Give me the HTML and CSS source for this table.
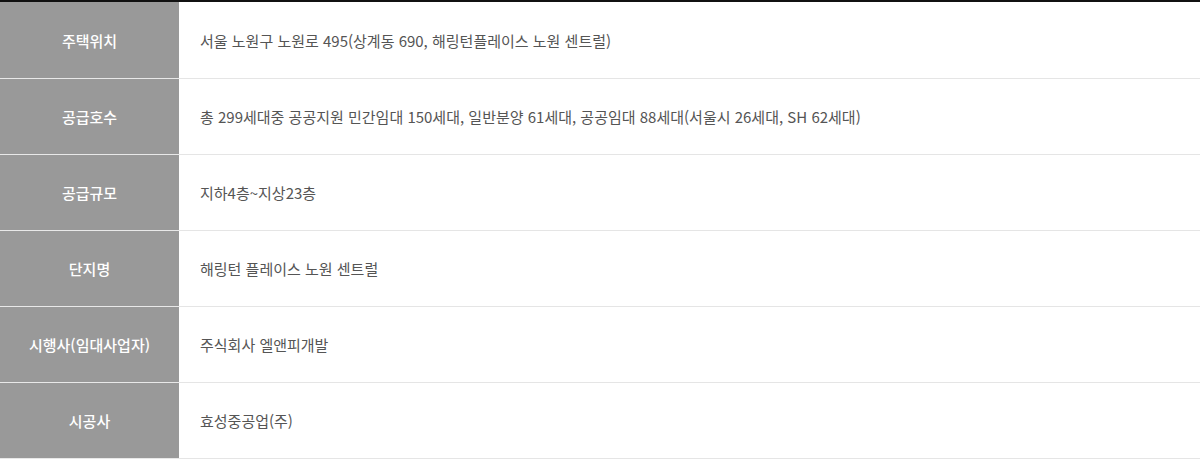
FILE: index.html
```html
<!DOCTYPE html>
<html lang="ko">
<head>
<meta charset="utf-8">
<link rel="stylesheet" href="styles.css">
</head>
<body>
<table class="info">
  <tbody>
    <tr class="first"><th>주택위치</th><td>서울 노원구 노원로 495(상계동 690, 해링턴플레이스 노원 센트럴)</td></tr>
    <tr><th>공급호수</th><td>총 299세대중 공공지원 민간임대 150세대, 일반분양 61세대, 공공임대 88세대(서울시 26세대, SH 62세대)</td></tr>
    <tr><th>공급규모</th><td>지하4층~지상23층</td></tr>
    <tr><th>단지명</th><td>해링턴 플레이스 노원 센트럴</td></tr>
    <tr><th>시행사(임대사업자)</th><td>주식회사 엘앤피개발</td></tr>
    <tr><th>시공사</th><td>효성중공업(주)</td></tr>
  </tbody>
</table>
</body>
</html>
```
FILE: styles.css
```css
html, body {
  margin: 0;
  padding: 0;
  background: #fff;
}
body {
  font-family: "Noto Sans CJK KR", "Noto Sans", sans-serif;
}
.info {
  width: 1200px;
  border-collapse: collapse;
  border-top: 2px solid #111;
  table-layout: fixed;
}
.info th {
  width: 179px;
  height: 75px;
  padding: 0;
  background: #999;
  color: #fff;
  font-size: 15px;
  font-weight: 500;
  text-align: center;
  border-bottom: 1px solid #e8e8e8;
  border-right: 1px solid #fff;
  box-sizing: content-box;
}
.info td {
  height: 75px;
  padding: 0 0 0 20px;
  color: #555;
  font-size: 15px;
  font-weight: 400;
  text-align: left;
  border-bottom: 1px solid #e5e5e5;
}
.info tr.first th,
.info tr.first td {
  height: 76px;
}
```
